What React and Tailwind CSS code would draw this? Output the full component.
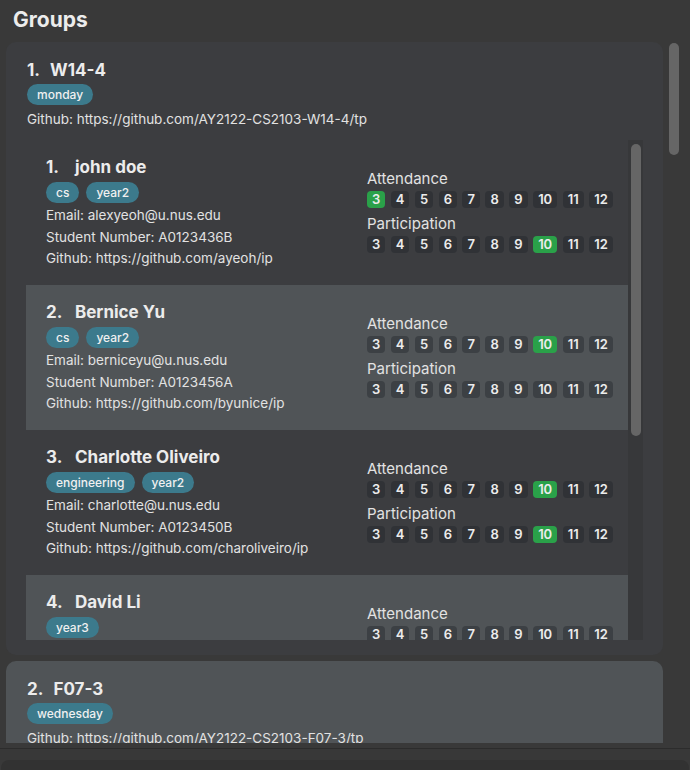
const weeks = [3, 4, 5, 6, 7, 8, 9, 10, 11, 12];

const students = [
  {
    name: "john doe",
    tags: ["cs", "year2"],
    email: "alexyeoh@u.nus.edu",
    number: "A0123436B",
    github: "https://github.com/ayeoh/ip",
    attendance: [3],
    participation: [10],
  },
  {
    name: "Bernice Yu",
    tags: ["cs", "year2"],
    email: "berniceyu@u.nus.edu",
    number: "A0123456A",
    github: "https://github.com/byunice/ip",
    attendance: [10],
    participation: [],
  },
  {
    name: "Charlotte Oliveiro",
    tags: ["engineering", "year2"],
    email: "charlotte@u.nus.edu",
    number: "A0123450B",
    github: "https://github.com/charoliveiro/ip",
    attendance: [10],
    participation: [10],
  },
  {
    name: "David Li",
    tags: ["year3"],
    email: "lidavid@u.nus.edu",
    number: "A0123458C",
    github: "https://github.com/davidli/ip",
    attendance: [],
    participation: [],
  },
];

function Tag({ label }) {
  return (
    <span className="h-[21px] px-[10px] rounded-full bg-[#3c7a8c] text-[12px] font-medium text-[#f0f0f0] flex items-center">
      {label}
    </span>
  );
}

function WeekRow({ marked }) {
  return (
    <div className="flex gap-[5.5px] mt-[3px]">
      {weeks.map((w) => (
        <span
          key={w}
          className={`h-[17px] px-[5px] rounded-[4px] text-[13px] font-semibold leading-[17px] text-[#ececec] ${
            marked.includes(w) ? "bg-[#2aa149]" : "bg-[#1e2228]/40"
          }`}
        >
          {w}
        </span>
      ))}
    </div>
  );
}

function StudentRow({ s, i }) {
  return (
    <div
      className={`h-[145px] shrink-0 flex ${i % 2 === 1 ? "bg-[#505457]" : ""}`}
    >
      <div className="w-[341px] pl-[20px] pt-[16px]">
        <div className="flex text-[17px] font-bold leading-[22px] text-[#ececec]">
          <span className="w-[29px]">{i + 1}.</span>
          <span>{s.name}</span>
        </div>
        <div className="flex gap-[7px] mt-[4px]">
          {s.tags.map((t) => (
            <Tag key={t} label={t} />
          ))}
        </div>
        <div className="mt-[2px] text-[13.5px] leading-[21.5px] text-[#e2e2e2]">
          <div>Email: {s.email}</div>
          <div>Student Number: {s.number}</div>
          <div>Github: {s.github}</div>
        </div>
      </div>
      <div className="pt-[30px] text-[#e2e2e2]">
        <div className="text-[15px] leading-[18px]">Attendance</div>
        <WeekRow marked={s.attendance} />
        <div className="text-[15px] leading-[18px] mt-[7px]">Participation</div>
        <WeekRow marked={s.participation} />
      </div>
    </div>
  );
}

function GroupHeader({ n, name, day, repo }) {
  return (
    <>
      <div className="flex gap-[10px] text-[17px] font-bold leading-[22px] text-[#ececec]">
        <span>{n}.</span>
        <span>{name}</span>
      </div>
      <div className="flex mt-[3px]">
        <Tag label={day} />
      </div>
      <div className="mt-[4px] text-[13.5px] leading-[20px] text-[#e2e2e2]">
        Github: {repo}
      </div>
    </>
  );
}

export default function App() {
  return (
    <div
      className="w-[690px] h-[770px] bg-[#393939] overflow-hidden flex flex-col"
      style={{ fontFamily: "Inter, 'Noto Sans', sans-serif" }}
    >
      <div className="h-[42px] shrink-0 pl-[13px] pt-[6px] text-[21px] font-bold leading-[28px] text-[#ececec]">
        Groups
      </div>

      <div className="h-[701px] shrink-0 flex">
        <div className="w-[663px] pl-[6px] flex flex-col gap-[6px] overflow-hidden">
          {/* group 1 */}
          <div className="h-[613px] shrink-0 rounded-[10px] bg-[#3c3d40] px-[20px] pt-[17px] pb-[15px] flex flex-col">
            <div className="pl-[1px]">
              <GroupHeader
                n={1}
                name="W14-4"
                day="monday"
                repo="https://github.com/AY2122-CS2103-W14-4/tp"
              />
            </div>
            <div className="mt-[11px] flex-1 flex overflow-hidden">
              <div className="flex-1 flex flex-col overflow-hidden">
                {students.map((s, i) => (
                  <StudentRow key={s.name} s={s} i={i} />
                ))}
              </div>
              <div className="w-[15px] bg-[#37383a] pl-[3px] pt-[4px]">
                <div className="w-[10px] h-[292px] rounded-full bg-[#666666]" />
              </div>
            </div>
          </div>

          {/* group 2 */}
          <div className="h-[120px] shrink-0 rounded-[10px] bg-[#505457] px-[21px] pt-[17px]">
            <GroupHeader
              n={2}
              name="F07-3"
              day="wednesday"
              repo="https://github.com/AY2122-CS2103-F07-3/tp"
            />
          </div>
        </div>

        <div className="flex-1 pl-[6px] pt-[1px]">
          <div className="w-[10px] h-[112px] rounded-full bg-[#666666]" />
        </div>
      </div>

      <div className="h-[5px] shrink-0" />
      <div className="h-[12px] shrink-0 border-t border-[#2c2c2c] bg-[#383838]" />
      <div className="flex-1 rounded-t-[8px] bg-[#323232] mx-[1px]" />
    </div>
  );
}
